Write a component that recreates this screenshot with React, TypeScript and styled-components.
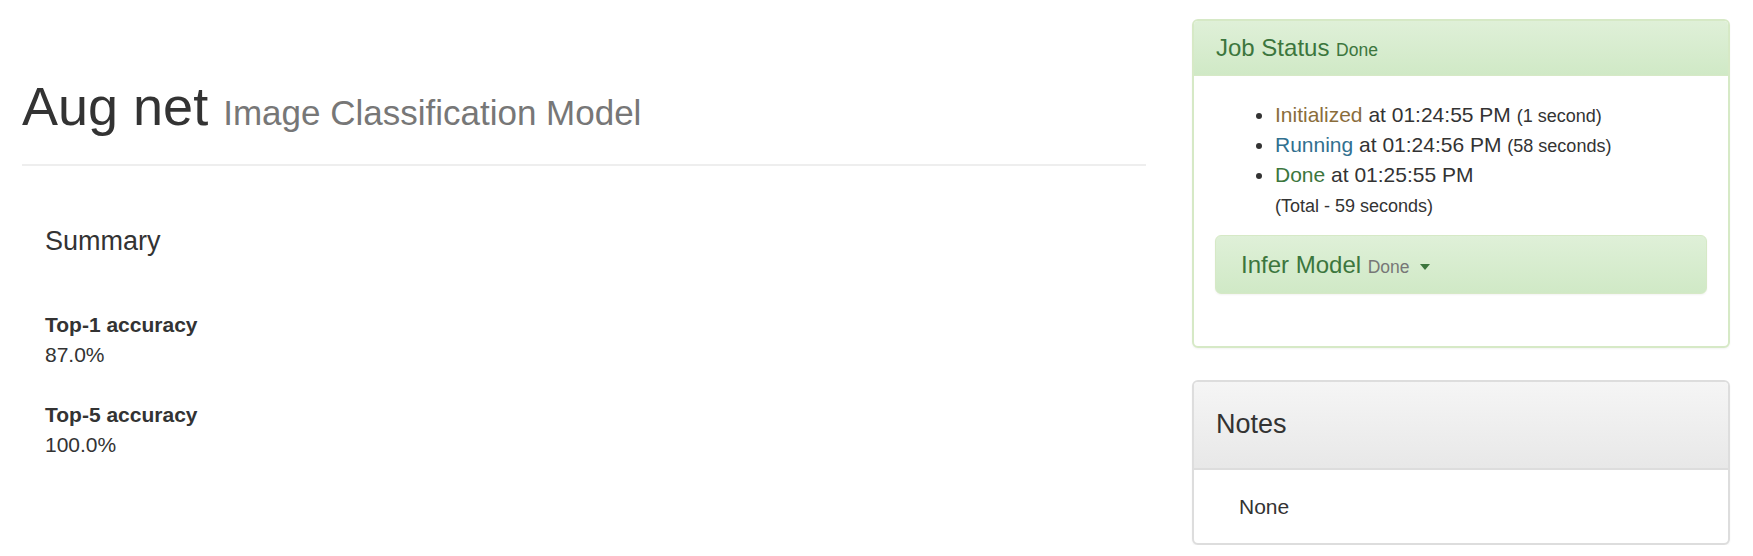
import React from "react";
import styled, { createGlobalStyle } from "styled-components";

const GlobalStyle = createGlobalStyle`
  html, body {
    margin: 0;
    padding: 0;
    background: #ffffff;
  }
  body {
    font-family: "Liberation Sans", Arial, Helvetica, sans-serif;
    font-size: 21px;
    line-height: 30px;
    color: #333333;
  }
  * { box-sizing: border-box; }
`;

const Page = styled.div`
  display: flex;
  align-items: flex-start;
  gap: 46px;
  padding-left: 22px;
`;

const MainColumn = styled.main`
  width: 1124px;
  flex: none;
`;

const PageHeader = styled.header`
  padding: 77px 0 29px;
  border-bottom: 2px solid #eeeeee;
`;

const Title = styled.h1`
  margin: 0;
  font-size: 54px;
  font-weight: 400;
  line-height: 58px;
  color: #333333;
`;

const TitleSmall = styled.small`
  font-size: 35px;
  line-height: 1;
  color: #777777;
  font-weight: 400;
`;

const SummarySection = styled.section`
  padding: 61px 0 0 23px;
`;

const SectionTitle = styled.h4`
  margin: 0 0 54px;
  font-size: 27px;
  font-weight: 400;
  line-height: 29px;
`;

const MetricList = styled.dl`
  margin: 0;
  display: flex;
  flex-direction: column;
  gap: 30px;
`;

const Metric = styled.div``;

const MetricName = styled.dt`
  font-weight: 700;
  line-height: 30px;
`;

const MetricValue = styled.dd`
  margin: 0;
  line-height: 30px;
`;

const SideColumn = styled.aside`
  width: 538px;
  flex: none;
  padding-top: 19px;
  display: flex;
  flex-direction: column;
  gap: 32px;
`;

const Panel = styled.section<{ $tone: "success" | "default" }>`
  border: 2px solid ${(p) => (p.$tone === "success" ? "#d6e9c6" : "#dddddd")};
  border-radius: 6px;
  background: #ffffff;
  box-shadow: 0 1px 2px rgba(0, 0, 0, 0.05);
  overflow: hidden;
`;

const SuccessHeading = styled.div`
  padding: 14px 22px 15px;
  background: linear-gradient(to bottom, #dff0d8 0%, #d0e9c6 100%);
  border-bottom: 1px solid #d6e9c6;
  color: #3c763d;
`;

const PanelTitle = styled.h3`
  margin: 0;
  font-size: 24px;
  font-weight: 400;
  line-height: 25px;
`;

const HeadingSmall = styled.small`
  font-size: 17.5px;
  line-height: 1;
  color: inherit;
`;

const JobBody = styled.div`
  padding: 24px 21px 21px;
`;

const StatusList = styled.ul`
  margin: 0 0 15px;
  padding-left: 60px;
`;

const StatusItem = styled.li`
  line-height: 30px;
`;

const StateName = styled.span<{ $state: "init" | "run" | "done" }>`
  color: ${(p) =>
    p.$state === "init" ? "#8a6d3b" : p.$state === "run" ? "#31708f" : "#3c763d"};
`;

const Note = styled.small`
  font-size: 18px;
  line-height: 1;
`;

const TaskBox = styled.div`
  margin-bottom: 31px;
  padding: 16px 25px;
  border: 1px solid #d6e9c6;
  border-radius: 6px;
  background: linear-gradient(to bottom, #dff0d8 0%, #d0e9c6 100%);
  box-shadow: 0 1px 2px rgba(0, 0, 0, 0.05);
  color: #3c763d;
`;

const TaskTitle = styled.h4`
  margin: 0;
  font-size: 24px;
  font-weight: 400;
  line-height: 25px;
`;

const TaskState = styled.small`
  font-size: 17.5px;
  line-height: 1;
  color: #777777;
`;

const Caret = styled.span`
  display: inline-block;
  width: 0;
  height: 0;
  margin-left: 10px;
  vertical-align: middle;
  border-top: 6px solid #3c763d;
  border-left: 5.5px solid transparent;
  border-right: 5.5px solid transparent;
`;

const DefaultHeading = styled.div`
  padding: 28px 22px 29px;
  background: linear-gradient(to bottom, #f5f5f5 0%, #e8e8e8 100%);
  border-bottom: 2px solid #dddddd;
  color: #333333;
`;

const NotesTitle = styled.h4`
  margin: 0;
  font-size: 27px;
  font-weight: 400;
  line-height: 29px;
`;

const NotesBody = styled.div`
  padding: 22px 22px 21px;
`;

const NoteText = styled.p`
  margin: 0 0 0 23px;
  line-height: 30px;
`;

export default function App() {
  return (
    <>
      <GlobalStyle />
      <Page>
        <MainColumn>
          <PageHeader>
            <Title>
              Aug net <TitleSmall>Image Classification Model</TitleSmall>
            </Title>
          </PageHeader>
          <SummarySection>
            <SectionTitle>Summary</SectionTitle>
            <MetricList>
              <Metric>
                <MetricName>Top-1 accuracy</MetricName>
                <MetricValue>87.0%</MetricValue>
              </Metric>
              <Metric>
                <MetricName>Top-5 accuracy</MetricName>
                <MetricValue>100.0%</MetricValue>
              </Metric>
            </MetricList>
          </SummarySection>
        </MainColumn>
        <SideColumn>
          <Panel $tone="success">
            <SuccessHeading>
              <PanelTitle>
                Job Status <HeadingSmall>Done</HeadingSmall>
              </PanelTitle>
            </SuccessHeading>
            <JobBody>
              <StatusList>
                <StatusItem>
                  <StateName $state="init">Initialized</StateName> at 01:24:55 PM{" "}
                  <Note>(1 second)</Note>
                </StatusItem>
                <StatusItem>
                  <StateName $state="run">Running</StateName> at 01:24:56 PM{" "}
                  <Note>(58 seconds)</Note>
                </StatusItem>
                <StatusItem>
                  <StateName $state="done">Done</StateName> at 01:25:55 PM
                  <br />
                  <Note>(Total - 59 seconds)</Note>
                </StatusItem>
              </StatusList>
              <TaskBox>
                <TaskTitle>
                  Infer Model <TaskState>Done</TaskState>
                  <Caret />
                </TaskTitle>
              </TaskBox>
            </JobBody>
          </Panel>
          <Panel $tone="default">
            <DefaultHeading>
              <NotesTitle>Notes</NotesTitle>
            </DefaultHeading>
            <NotesBody>
              <NoteText>None</NoteText>
            </NotesBody>
          </Panel>
        </SideColumn>
      </Page>
    </>
  );
}
